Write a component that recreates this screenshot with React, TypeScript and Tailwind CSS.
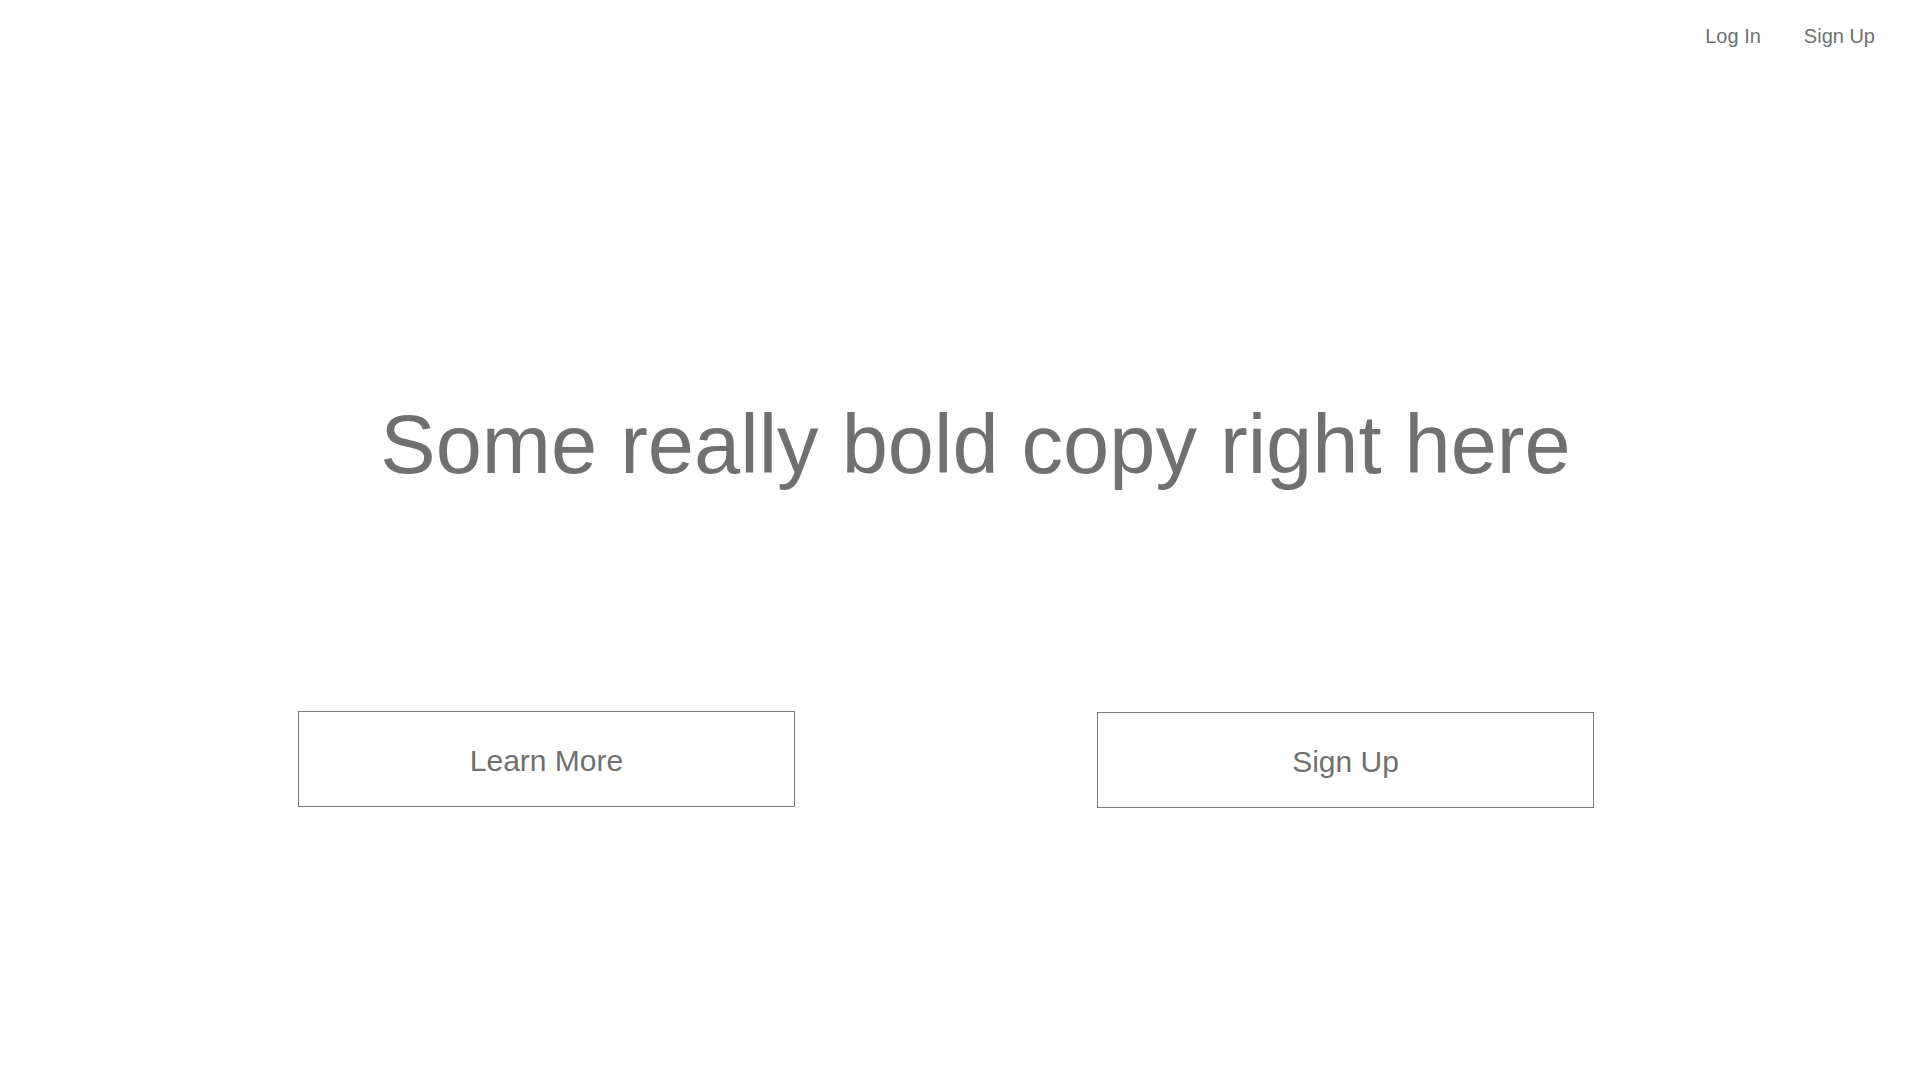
export default function App() {
  return (
    <div
      className="w-[1920px] h-[1080px] bg-white text-[#707070] flex flex-col"
      style={{ fontFamily: '"Liberation Sans", Arial, sans-serif' }}
    >
      <nav className="flex justify-end gap-[43px] pt-[26px] pr-[45px] text-[20px] leading-none">
        <a className="cursor-pointer">Log In</a>
        <a className="cursor-pointer">Sign Up</a>
      </nav>
      <h1 className="mt-[357px] pl-[31px] text-center text-[83px] leading-none font-normal">
        Some really bold copy right here
      </h1>
      <div className="mt-[225px] flex items-start gap-[302px] pl-[298px]">
        <button className="w-[497px] h-[96px] pt-[4px] border border-[#7a7a7a] flex items-center justify-center text-[30px] leading-none">
          Learn More
        </button>
        <button className="mt-[1px] w-[497px] h-[96px] pt-[4px] border border-[#7a7a7a] flex items-center justify-center text-[30px] leading-none">
          Sign Up
        </button>
      </div>
    </div>
  );
}
